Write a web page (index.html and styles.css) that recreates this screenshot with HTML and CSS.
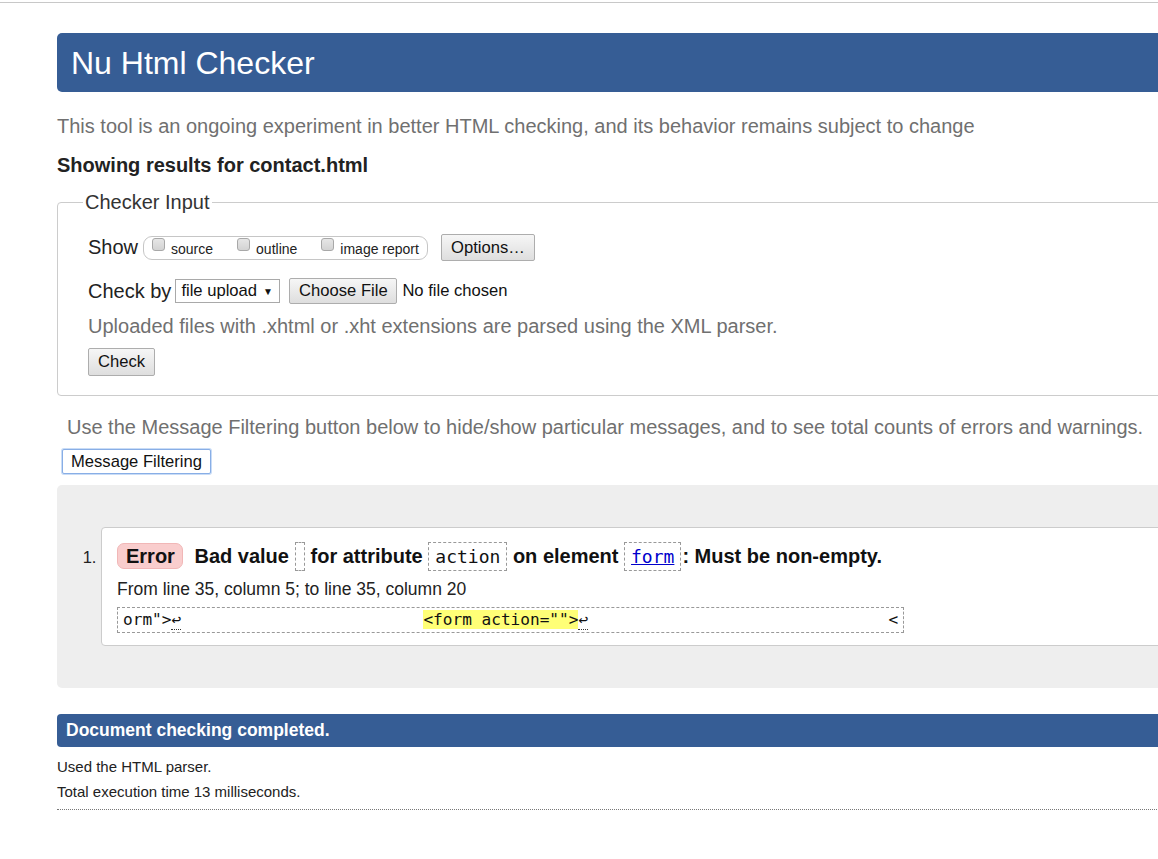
FILE: index.html
```html
<!DOCTYPE html>
<html lang="en">
<head>
<meta charset="utf-8">
<title>Nu Html Checker</title>
<link rel="stylesheet" href="styles.css">
</head>
<body>
<div class="chrome-line"></div>
<div class="page">
  <h1 class="title">Nu Html Checker</h1>
  <p class="intro">This tool is an ongoing experiment in better HTML checking, and its behavior remains subject to change</p>
  <p class="results-for">Showing results for contact.html</p>

  <fieldset class="input-set">
    <legend class="input-legend">Checker Input</legend>
    <div class="row row-show">
      <span class="row-label">Show</span>
      <span class="pill">
        <span class="opt"><span class="cb"></span><span class="opt-text">source</span></span>
        <span class="opt"><span class="cb"></span><span class="opt-text">outline</span></span>
        <span class="opt"><span class="cb"></span><span class="opt-text">image report</span></span>
      </span>
      <button class="btn btn-options">Options…</button>
    </div>
    <div class="row row-checkby">
      <span class="row-label">Check by</span>
      <span class="select">file upload <span class="caret">▼</span></span>
      <button class="btn btn-file">Choose File</button>
      <span class="no-file">No file chosen</span>
    </div>
    <p class="hint">Uploaded files with .xhtml or .xht extensions are parsed using the XML parser.</p>
    <div class="row row-check">
      <button class="btn btn-check">Check</button>
    </div>
  </fieldset>

  <p class="filter-note">Use the Message Filtering button below to hide/show particular messages, and to see total counts of errors and warnings.</p>
  <button class="btn-filter">Message Filtering</button>

  <div class="results">
    <ol class="messages">
      <li class="msg">
        <p class="msg-line"><span class="badge">Error</span> <span class="msg-text">Bad value <code class="cd cd-empty"></code> for attribute <code class="cd">action</code> on element <a class="cd cd-link" href="#">form</a>: Must be non-empty.</span></p>
        <p class="location">From line 35, column 5; to line 35, column 20</p>
        <p class="extract-wrap"><code class="extract">orm"&gt;<span class="lf">↩</span>                         <mark class="hl">&lt;form action=""&gt;</mark><span class="lf">↩</span>                               &lt;</code></p>
      </li>
    </ol>
  </div>

  <p class="done">Document checking completed.</p>
  <p class="meta">Used the HTML parser.</p>
  <p class="meta">Total execution time 13 milliseconds.</p>
  <div class="dotted"></div>
</div>
</body>
</html>
```
FILE: styles.css
```css
html {
  overflow: hidden;
}
body {
  margin: 0;
  background: #fff;
  color: #222;
  font-family: "Liberation Sans", Arial, sans-serif;
}
.chrome-line {
  margin-top: 2px;
  height: 1px;
  background: #c8c8c8;
}
.page {
  margin-left: 57px;
  width: 1180px;
}
.title {
  margin: 30px 0 0;
  height: 59px;
  line-height: 60px;
  padding-left: 14px;
  background: #365d95;
  color: #fff;
  font-size: 32px;
  font-weight: normal;
  border-radius: 5px;
}
.intro {
  margin: 22px 0 0;
  font-size: 20px;
  line-height: 24px;
  color: #707070;
}
.results-for {
  margin: 15px 0 0;
  font-size: 20px;
  line-height: 24px;
  font-weight: bold;
  color: #222;
}
.input-set {
  margin: 13px 0 0;
  padding: 6px 30px 19px;
  border: 1px solid #ccc;
  border-radius: 4px;
}
.input-legend {
  margin-left: -5px;
  padding: 0 2px;
  font-size: 20px;
  line-height: 24px;
  color: #333;
}
.row {
  display: flex;
  align-items: center;
}
.row-label {
  font-size: 20px;
  color: #222;
  margin-right: 5px;
}
.pill {
  display: inline-flex;
  align-items: center;
  height: 22px;
  border: 1px solid #c6c6c6;
  border-radius: 9px;
  padding: 0 8px 0 8px;
  margin-right: 13px;
}
.opt {
  display: inline-flex;
  align-items: center;
  margin-right: 24px;
}
.opt:last-child {
  margin-right: 0;
}
.cb {
  display: inline-block;
  width: 11px;
  height: 11px;
  border: 1px solid #a8a8a8;
  border-radius: 3px;
  background: linear-gradient(#e6e6e6, #d3d3d3);
  margin-right: 6px;
  position: relative;
  top: -3px;
}
.opt-text {
  font-size: 14px;
  color: #222;
  position: relative;
  top: 1px;
}
.btn {
  font-family: "Liberation Sans", Arial, sans-serif;
  font-size: 16.6px;
  color: #111;
  border: 1px solid #adadad;
  border-radius: 2px;
  background: linear-gradient(#f6f6f6, #dedede);
  padding: 0 10px;
  margin: 0;
}
.row-show {
  margin-top: 14px;
}
.btn-options {
  height: 27px;
  width: 94px;
  padding: 0;
}
.row-checkby {
  margin-top: 17px;
}
.select {
  display: inline-flex;
  align-items: center;
  height: 24px;
  box-sizing: border-box;
  width: 105px;
  border: 1px solid #a9a9a9;
  padding-left: 5px;
  font-size: 16.6px;
  color: #111;
  margin-left: -1px;
  margin-right: 9px;
}
.caret {
  font-size: 10px;
  margin-left: 6px;
}
.btn-file {
  height: 26px;
  width: 108px;
  padding: 0;
}
.no-file {
  font-size: 16.6px;
  margin-left: 5px;
  color: #111;
}
.hint {
  margin: 10px 0 0;
  font-size: 20px;
  line-height: 24px;
  color: #707070;
}
.row-check {
  margin-top: 10px;
}
.btn-check {
  height: 28px;
  width: 67px;
  padding: 0;
}
.filter-note {
  margin: 19px 0 0 10px;
  font-size: 20px;
  line-height: 24px;
  color: #707070;
}
.btn-filter {
  display: block;
  margin: 10px 0 0 5px;
  height: 25px;
  width: 149px;
  padding: 0;
  font-family: "Liberation Sans", Arial, sans-serif;
  font-size: 16.6px;
  color: #111;
  background: #fff;
  border: 1px solid #88aee6;
  border-radius: 2px;
  box-shadow: 0 0 0 1px #c9dcf6;
}
.results {
  margin-top: 11px;
  background: #eee;
  border-radius: 5px;
  padding: 42px 0 42px 44px;
}
.messages {
  margin: 0;
  padding: 0;
  list-style: decimal outside;
}
.msg {
  font-size: 17.5px;
  color: #222;
  background: #fff;
  border: 1px solid #ccc;
  border-radius: 4px;
  padding: 13px 15px 12px;
}
.msg::marker {
  font-size: 16.5px;
  color: #222;
}
.msg-line {
  margin: 0;
  font-size: 20px;
  line-height: 30px;
  font-weight: bold;
  color: #111;
}
.badge {
  display: inline-block;
  background: #f9cdcd;
  border: 1px solid #f1b7b7;
  border-radius: 7px;
  padding: 0 7px 0 8px;
  line-height: 24px;
  margin-right: 6px;
}
.cd {
  font-family: "DejaVu Sans Mono", "Liberation Mono", monospace;
  font-size: 18px;
  font-weight: normal;
  color: #111;
  border: 1px dashed #999;
  padding: 3px 6px 3px;
}
.cd-empty {
  padding: 3px 4px 3px;
  margin-right: 6px;
}
.cd-link {
  color: #0000cc;
  text-decoration: underline;
  margin-right: 1px;
}
.location {
  margin: 7px 0 0;
  line-height: 20px;
}
.extract-wrap {
  margin: 8px 0 0;
  line-height: 24px;
}
.extract {
  display: inline-block;
  white-space: pre;
  font-family: "DejaVu Sans Mono", "Liberation Mono", monospace;
  font-size: 16.1px;
  line-height: 24px;
  border: 1px dashed #999;
  padding: 0 5px;
  color: #111;
}
.lf {
  border-bottom: 1px dotted #333;
}
.hl {
  background: #ffff77;
  color: #111;
}
.done {
  margin: 26px 0 0;
  height: 33px;
  line-height: 33px;
  padding-left: 9px;
  background: #365d95;
  color: #fff;
  font-size: 17.5px;
  font-weight: bold;
  border-radius: 4px 0 0 4px;
}
.meta {
  margin: 11px 0 0;
  font-size: 15px;
  line-height: 17px;
  color: #222;
}
.meta + .meta {
  margin-top: 8px;
}
.dotted {
  margin-top: 9px;
  border-top: 1px dotted #777;
}
```
